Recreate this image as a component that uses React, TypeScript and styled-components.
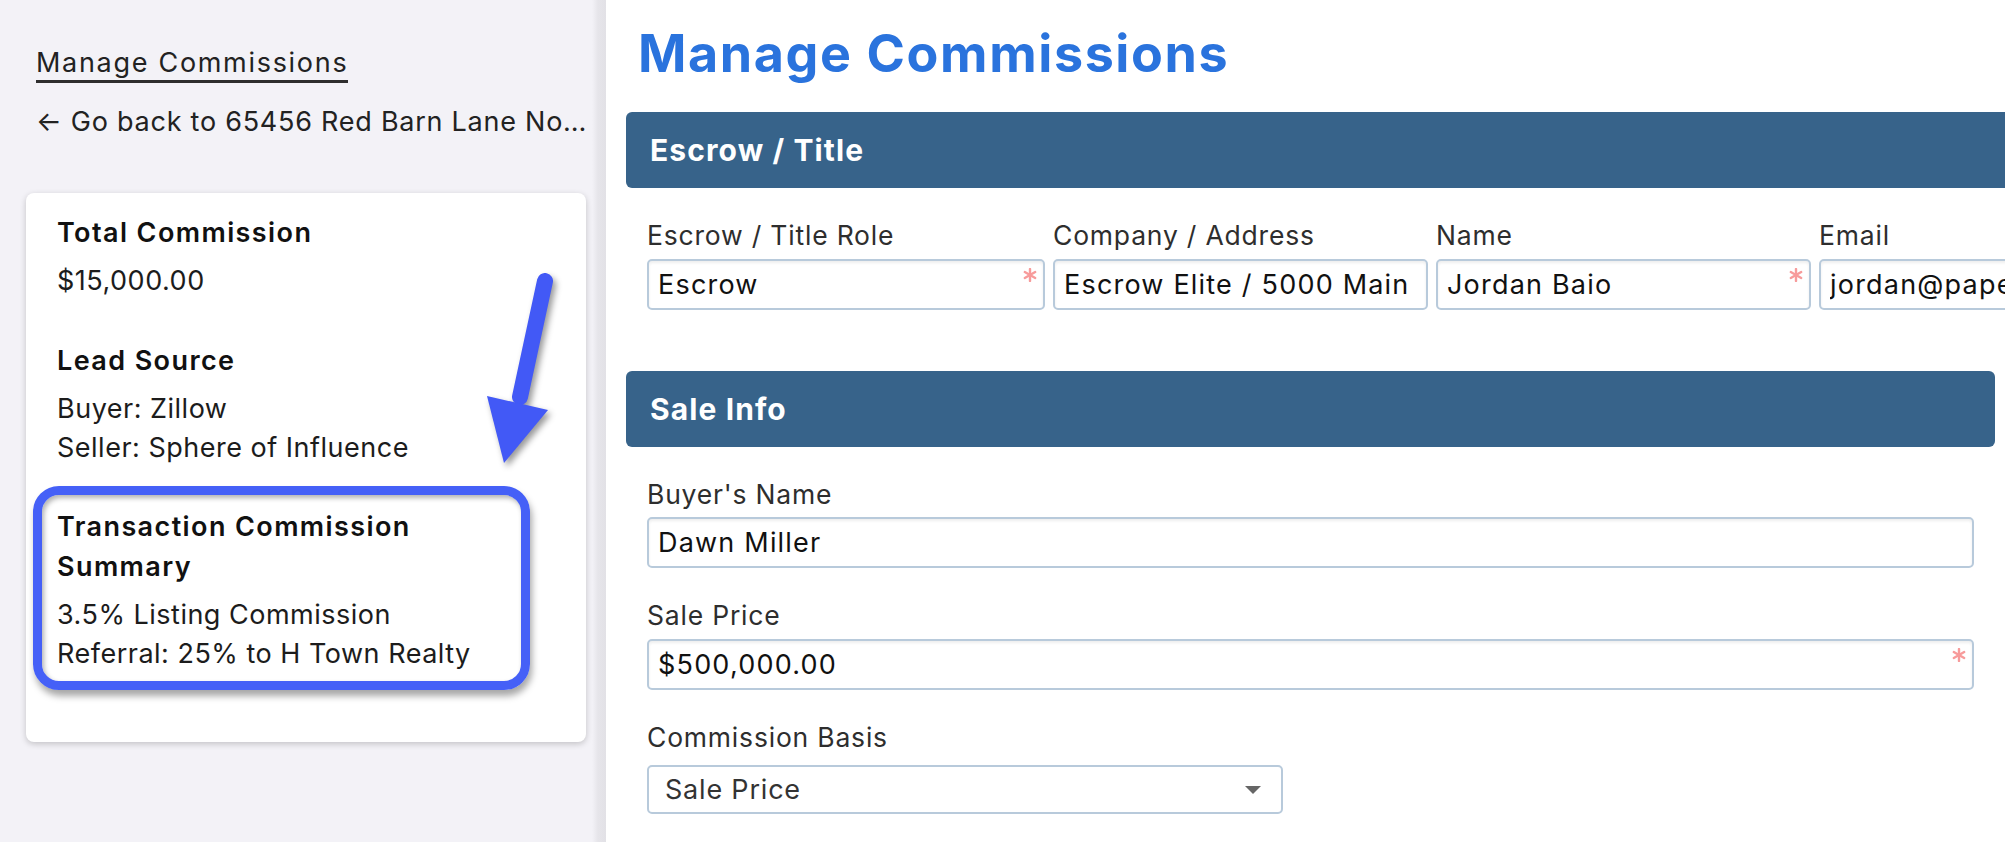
import styled, { createGlobalStyle } from 'styled-components';

const GlobalStyle = createGlobalStyle`
  * { box-sizing: border-box; }
  html, body { margin: 0; padding: 0; overflow: hidden; }
  body {
    font-family: Inter, 'Noto Sans', sans-serif;
    color: #222;
    background: #fff;
    letter-spacing: 0.5px;
  }
`;

const escrowFields = [
  { label: 'Escrow / Title Role', value: 'Escrow', required: true },
  { label: 'Company / Address', value: 'Escrow Elite / 5000 Main St', required: false },
  { label: 'Name', value: 'Jordan Baio', required: true },
  { label: 'Email', value: 'jordan@paperlessagent.com', required: false },
];

const Asterisk = () => (
  <Star viewBox="0 0 14 14" width="14" height="14">
    <g stroke="#f79b9b" strokeWidth="2.4" strokeLinecap="round">
      <line x1="7" y1="1" x2="7" y2="13" />
      <line x1="1.8" y1="4" x2="12.2" y2="10" />
      <line x1="1.8" y1="10" x2="12.2" y2="4" />
    </g>
  </Star>
);

const Field = ({ label, value, required }: { label: string; value: string; required?: boolean }) => (
  <FieldBox>
    <Label>{label}</Label>
    <InputWrap>
      <TextInput readOnly value={value} />
      {required && <Asterisk />}
    </InputWrap>
  </FieldBox>
);

const App = () => {
  return (
    <>
      <GlobalStyle />
      <Page>
        <Sidebar>
          <TopLink>Manage Commissions</TopLink>
          <BackLink>← Go back to 65456 Red Barn Lane No…</BackLink>
          <Card>
            <Block>
              <BlockTitle>Total Commission</BlockTitle>
              <BlockText>$15,000.00</BlockText>
            </Block>
            <Block>
              <BlockTitle>Lead Source</BlockTitle>
              <BlockText>Buyer: Zillow</BlockText>
              <BlockText>Seller: Sphere of Influence</BlockText>
            </Block>
            <Highlight>
              <BlockTitle>Transaction Commission Summary</BlockTitle>
              <BlockText>3.5% Listing Commission</BlockText>
              <BlockText>Referral: 25% to H Town Realty</BlockText>
            </Highlight>
            <Arrow viewBox="0 0 90 210" width="90" height="210">
              <line x1="69" y1="18" x2="44" y2="134" stroke="#4259f6" strokeWidth="16" strokeLinecap="round" />
              <polygon points="11,133 72,147 28,200" fill="#4259f6" />
            </Arrow>
          </Card>
        </Sidebar>

        <Main>
          <Title>Manage Commissions</Title>

          <Section $wide>
            <SectionBar>Escrow / Title</SectionBar>
            <FieldGrid $columns="398px 375px 375px 375px">
              {escrowFields.map((f) => (
                <Field key={f.label} {...f} />
              ))}
            </FieldGrid>
          </Section>

          <Section>
            <SectionBar>Sale Info</SectionBar>
            <FieldGrid $columns="1fr">
              <Field label="Buyer's Name" value="Dawn Miller" />
              <Field label="Sale Price" value="$500,000.00" required />
              <FieldBox>
                <Label>Commission Basis</Label>
                <SelectBox>
                  Sale Price
                  <svg viewBox="0 0 16 8" width="16" height="8">
                    <polygon points="0,0 16,0 8,8" fill="#666" />
                  </svg>
                </SelectBox>
              </FieldBox>
            </FieldGrid>
          </Section>
        </Main>
      </Page>
    </>
  );
};

export default App;

const Page = styled.div`
  display: flex;
  width: 100%;
  min-height: 842px;
`;

const Sidebar = styled.aside`
  flex: 0 0 606px;
  min-width: 0;
  min-height: 842px;
  overflow: hidden;
  padding: 49px 20px 0 26px;
  display: flex;
  flex-direction: column;
  align-items: flex-start;
  background: linear-gradient(
    to right,
    #f3f2f7 calc(100% - 14px),
    #e6e5ea calc(100% - 8px),
    #e2e1e6
  );
`;

const TopLink = styled.a`
  margin-left: 10px;
  padding-bottom: 4px;
  border-bottom: 3px solid #2e2e2e;
  font-size: 27px;
  line-height: 27px;
  letter-spacing: 1.7px;
  color: #222;
`;

const BackLink = styled.a`
  margin: 21px 0 0 10px;
  font-size: 27px;
  line-height: 36px;
  letter-spacing: 0.75px;
  color: #222;
  white-space: nowrap;
`;

const Card = styled.div`
  position: relative;
  width: 560px;
  flex-shrink: 0;
  margin-top: 53px;
  padding: 20px 31px 52px;
  background: #fff;
  border-radius: 8px;
  box-shadow: 0 2px 6px rgba(0, 0, 0, 0.2);
`;

const Block = styled.div`
  margin-bottom: 40.5px;

  &:nth-of-type(2) {
    margin-bottom: 18px;
  }
`;

const BlockTitle = styled.div`
  margin-bottom: 9.5px;
  font-size: 27px;
  line-height: 39.5px;
  font-weight: 600;
  letter-spacing: 1.4px;
  color: #111;
`;

const BlockText = styled.div`
  font-size: 27px;
  line-height: 38.8px;
  color: #1c1c1c;
`;

const Highlight = styled.div`
  width: 497px;
  margin-left: -24px;
  padding: 12.5px 10px 7.5px 15px;
  border: 9px solid #4560f7;
  border-radius: 26px;
  box-shadow: 2px 6px 7px rgba(0, 0, 0, 0.35), inset 2px 3px 5px rgba(0, 0, 0, 0.3);
`;

const Arrow = styled.svg`
  position: absolute;
  left: 450px;
  top: 70px;
  filter: drop-shadow(3px 4px 3px rgba(0, 0, 0, 0.4));
`;

const Main = styled.main`
  flex: 1;
  min-width: 0;
  padding: 23px 10px 0 20px;
  background: #fff;
`;

const Title = styled.h1`
  margin: 0 0 27px 12px;
  font-size: 52px;
  line-height: 62px;
  font-weight: 700;
  letter-spacing: 1.6px;
  color: #2a73dd;
`;

const Section = styled.section<{ $wide?: boolean }>`
  margin-bottom: 61px;
  width: ${(p) => (p.$wide ? 'max-content' : 'auto')};
  min-width: 100%;
`;

const SectionBar = styled.div`
  display: flex;
  align-items: center;
  height: 76px;
  padding: 0 24px;
  border-radius: 6px;
  background: #37638a;
  color: #fff;
  font-size: 30px;
  font-weight: 700;
  letter-spacing: 1.1px;
`;

const FieldGrid = styled.div<{ $columns: string }>`
  display: grid;
  grid-template-columns: ${(p) => p.$columns};
  column-gap: 8px;
  row-gap: 29px;
  padding: 29px 21px 0;
`;

const FieldBox = styled.div`
  display: flex;
  flex-direction: column;
  min-width: 0;
`;

const Label = styled.label`
  margin-bottom: 5.5px;
  font-size: 26.5px;
  line-height: 36px;
  letter-spacing: 0.8px;
  color: #2e2e2e;
`;

const InputWrap = styled.div`
  position: relative;
  height: 51px;
`;

const TextInput = styled.input`
  width: 100%;
  height: 100%;
  padding: 0 9px;
  border: 2px solid #b8cadb;
  border-radius: 5px;
  box-shadow: inset 0 2px 3px rgba(0, 0, 0, 0.07);
  background: #fff;
  font: inherit;
  font-size: 27px;
  letter-spacing: 1.2px;
  color: #111;
  outline: none;
`;

const Star = styled.svg`
  position: absolute;
  top: 9px;
  right: 8px;
`;

const SelectBox = styled.div`
  display: flex;
  align-items: center;
  justify-content: space-between;
  width: 636px;
  height: 49px;
  margin-top: 5px;
  padding: 0 20px 0 16px;
  border: 2px solid #b8cadb;
  border-radius: 5px;
  background: #fff;
  font-size: 27px;
  letter-spacing: 0.8px;
  color: #333;
`;
